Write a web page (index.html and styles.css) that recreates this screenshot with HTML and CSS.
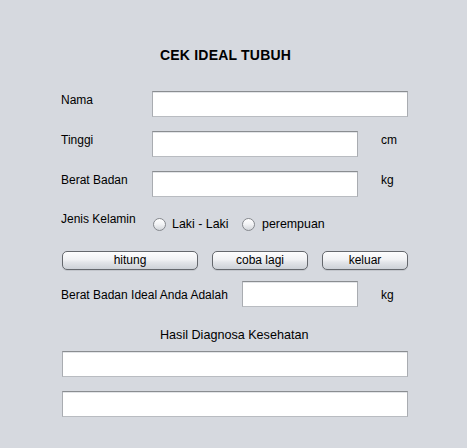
FILE: index.html
```html
<!DOCTYPE html>
<html>
<head>
<meta charset="utf-8">
<title>Cek Ideal Tubuh</title>
<link rel="stylesheet" href="styles.css">
</head>
<body>
<div class="form">
  <div class="title">CEK IDEAL TUBUH</div>

  <div class="row row-nama">
    <span class="label">Nama</span>
    <input class="field field-wide" type="text">
  </div>

  <div class="row">
    <span class="label">Tinggi</span>
    <input class="field field-mid" type="text">
    <span class="unit">cm</span>
  </div>

  <div class="row">
    <span class="label">Berat Badan</span>
    <input class="field field-mid" type="text">
    <span class="unit">kg</span>
  </div>

  <div class="row row-jk">
    <span class="label">Jenis Kelamin</span>
    <div class="radios">
      <label class="opt opt-first"><span class="radio"></span><span>Laki - Laki</span></label>
      <label class="opt"><span class="radio"></span><span>perempuan</span></label>
    </div>
  </div>

  <div class="buttons">
    <button class="btn btn-hitung">hitung</button>
    <button class="btn btn-coba">coba lagi</button>
    <button class="btn btn-keluar">keluar</button>
  </div>

  <div class="row row-result">
    <span class="label label-result">Berat Badan Ideal Anda Adalah</span>
    <input class="field field-small" type="text">
    <span class="unit unit-result">kg</span>
  </div>

  <div class="subtitle">Hasil Diagnosa Kesehatan</div>

  <div class="diag">
    <input class="field field-full" type="text">
    <input class="field field-full" type="text">
  </div>
</div>
</body>
</html>
```

FILE: styles.css
```css
html, body {
  margin: 0;
  padding: 0;
  background: #d6d9df;
}

body {
  width: 467px;
  height: 448px;
  overflow: hidden;
  font-family: "Liberation Sans", Arial, sans-serif;
  font-size: 12px;
  color: #000;
}

.form {
  padding-top: 45px;
}

.title {
  margin-left: 160px;
  height: 20px;
  line-height: 20px;
  font-size: 14px;
  font-weight: bold;
  letter-spacing: 0.2px;
}

.row {
  display: flex;
  align-items: flex-start;
  height: 26px;
  margin-top: 14px;
}

.row-nama {
  margin-top: 26px;
}

.label {
  box-sizing: border-box;
  width: 152px;
  padding-left: 61px;
  line-height: 18px;
  flex: none;
}

.field {
  box-sizing: border-box;
  height: 26px;
  margin: 0;
  padding: 0 4px;
  background: #fff;
  border: 1px solid #a9acb1;
  border-top-color: #8a8d91;
  border-bottom-color: #b9bcc1;
  box-shadow: inset 0 1px 0 #e3e5e8;
  border-radius: 0;
  font: inherit;
  outline: none;
  flex: none;
}

.field-wide { width: 256px; }
.field-mid { width: 206px; }
.field-small { width: 116px; }
.field-full { width: 346px; display: block; margin-left: 62px; }

.unit {
  margin-left: 23px;
  line-height: 18px;
}

.row-jk {
  margin-top: 13px;
}

.radios {
  display: flex;
  align-items: center;
  margin-top: 8px;
  height: 13px;
  margin-left: 1px;
  font-size: 12.4px;
}

.opt {
  display: flex;
  align-items: center;
  gap: 6px;
  line-height: 13px;
}

.opt + .opt {
  gap: 7px;
}

.opt-first {
  width: 89px;
}

.radio {
  box-sizing: border-box;
  width: 13px;
  height: 13px;
  border-radius: 50%;
  border: 1px solid #85888d;
  background: linear-gradient(#ffffff, #f3f4f6 45%, #d3d6db);
  flex: none;
}

.buttons {
  display: flex;
  margin-top: 15px;
  margin-left: 62px;
  gap: 14px;
  height: 19px;
}

.btn {
  box-sizing: border-box;
  height: 19px;
  margin: 0;
  padding: 0;
  border: 1px solid #65686d;
  border-radius: 5px;
  background: linear-gradient(#fdfdfe, #f1f2f4 45%, #e3e5e9 60%, #cdd1d7);
  box-shadow: 0 1px 0 #c3c6cc;
  font: inherit;
  color: #000;
  line-height: 17px;
}

.btn-hitung { width: 136px; }
.btn-coba { width: 96px; }
.btn-keluar { width: 86px; }

.row-result {
  margin-top: 11px;
}

.label-result {
  width: 242px;
  margin-top: 5px;
}

.unit-result {
  margin-top: 5px;
}

.subtitle {
  margin-top: 19px;
  margin-left: 160px;
  line-height: 18px;
  font-size: 12.6px;
}

.diag {
  display: flex;
  flex-direction: column;
  gap: 14px;
  margin-top: 7px;
}
```
